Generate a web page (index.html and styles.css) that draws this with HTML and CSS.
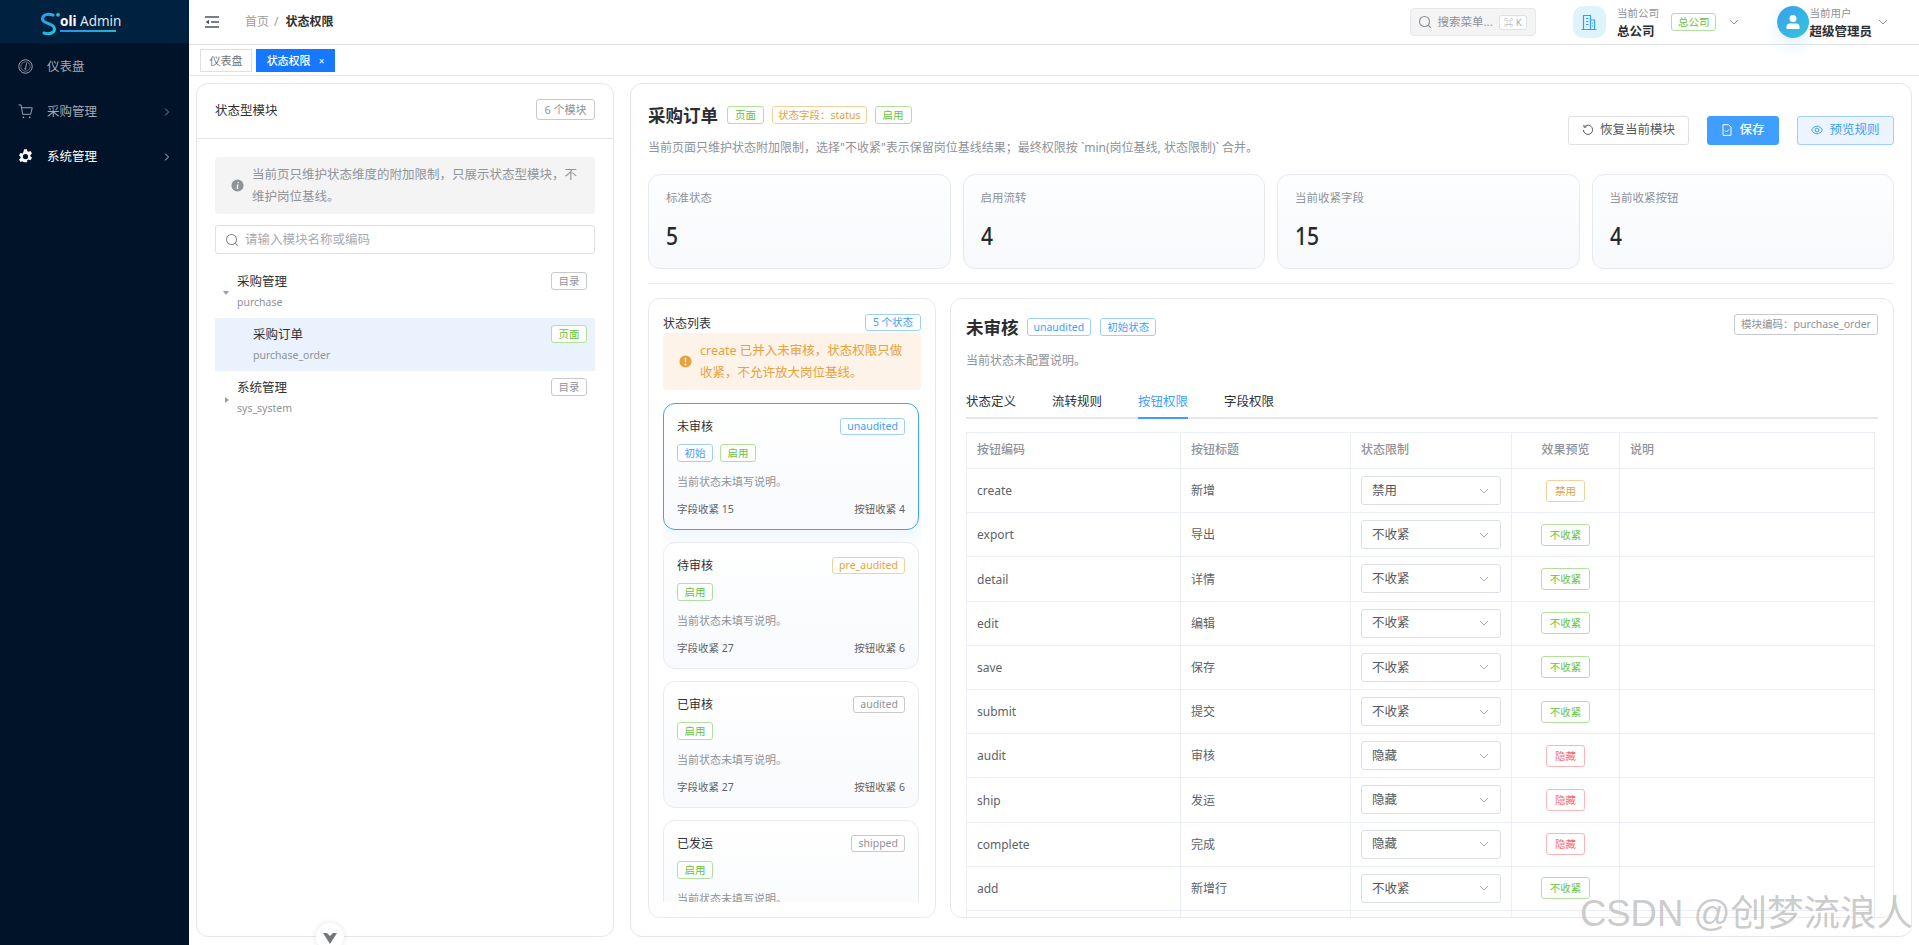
FILE: index.html
```html
<!DOCTYPE html>
<html lang="zh-CN">
<head>
<meta charset="utf-8">
<title>状态权限</title>
<link rel="stylesheet" href="styles.css">
</head>
<body>
<svg class="defs" width="0" height="0" aria-hidden="true">
  <defs>
    <linearGradient id="logoG" x1="0" y1="0" x2="1" y2="1"><stop offset="0" stop-color="#2f9bf0"/><stop offset="1" stop-color="#25c3d6"/></linearGradient>
    <symbol id="chev" viewBox="0 0 12 12"><path d="M2 4l4 4 4-4" fill="none" stroke="currentColor" stroke-width="1"/></symbol>
    <symbol id="search" viewBox="0 0 14 14"><circle cx="6.500" cy="6.500" r="5" fill="none" stroke="currentColor" stroke-width="1.100"/><path d="M10.200 10.200l2.600 2.600" stroke="currentColor" stroke-width="1.100"/></symbol>
  </defs>
</svg>
<aside class="sidebar">
  <div class="logo">
    <svg class="logo-mark" width="22" height="24" viewBox="0 0 22 24"><path d="M13 3.200C9 1.600 2.500 2 2.500 7c0 5 12 3.800 12 10 0 4.500-6 5.500-10.500 4" fill="none" stroke="url(#logoG)" stroke-width="3" stroke-linecap="round"/><circle cx="18" cy="2.800" r="1.900" fill="#25c3d6"/></svg>
    <span class="logo-text"><b>oli</b> Admin</span>
  </div>
  <nav class="menu">
    <div class="menu-item">
      <svg class="menu-icon" viewBox="0 0 16 16"><circle cx="8" cy="8" r="7.200" fill="none" stroke="currentColor"/><circle cx="8" cy="8" r="5" fill="none" stroke="currentColor" stroke-width=".6"/><path d="M9.200 4.500L8 10" stroke="currentColor"/><circle cx="7.800" cy="10.500" r="1" fill="currentColor"/></svg>
      <span>仪表盘</span>
    </div>
    <div class="menu-item">
      <svg class="menu-icon" viewBox="0 0 16 16"><path d="M.5 1h2.700L5 11h8.500l1.700-7H3.800" fill="none" stroke="currentColor"/><circle cx="5.800" cy="14.200" r=".9" fill="currentColor"/><circle cx="12.500" cy="14.200" r=".9" fill="currentColor"/></svg>
      <span>采购管理</span>
      <svg class="menu-arrow" viewBox="0 0 8 12"><path d="M1.500 1.500L6 6l-4.500 4.500" fill="none" stroke="currentColor"/></svg>
    </div>
    <div class="menu-item active">
      <svg class="menu-icon" viewBox="0 0 16 16"><path fill-rule="evenodd" d="M6.400.2h3.200l.4 2.200 1.200.6 2.100-.9 1.600 2.700-1.700 1.500v1.400l1.700 1.500-1.600 2.700-2.100-.8-1.200.7-.4 2.200H6.400L6 13.800l-1.200-.7-2.100.8-1.600-2.700 1.700-1.500V8.300L1.100 6.800l1.600-2.700 2.100.9L6 2.400zM8 5.200a2.800 2.800 0 100 5.600 2.800 2.800 0 000-5.600z" fill="currentColor"/></svg>
      <span>系统管理</span>
      <svg class="menu-arrow" viewBox="0 0 8 12"><path d="M1.500 1.500L6 6l-4.500 4.500" fill="none" stroke="currentColor"/></svg>
    </div>
  </nav>
</aside>
<div class="main">
  <header class="topbar">
    <svg class="hamburger" width="14" height="12" viewBox="0 0 14 12"><path d="M0 1h14M6 6h8M0 11h14" stroke="#4c5566" stroke-width="1.700"/><path d="M4 3.800L.6 6 4 8.200z" fill="#4c5566"/></svg>
    <div class="crumbs"><span class="crumb-home">首页</span><span class="crumb-sep">/</span><b>状态权限</b></div>
    <div class="top-right">
      <div class="top-search">
        <svg class="ico14" viewBox="0 0 14 14"><use href="#search"/></svg>
        <span class="top-search-text">搜索菜单...</span>
        <span class="kbd">⌘ K</span>
      </div>
      <div class="company">
        <span class="company-ico"><svg width="16" height="17" viewBox="0 0 16 17"><path d="M2.500 15.500V1.500h7v14M9.500 6h4v9.500M0.500 15.500h15M5 4.500h2.500M5 7.500h2.500M5 10.500h2.500M11 9h1M11 12h1" fill="none" stroke="#3a9bff" stroke-width="1.200"/></svg></span>
        <div class="who"><small>当前公司</small><b>总公司</b></div>
        <span class="tag green co-tag">总公司</span>
        <svg class="chev-top" viewBox="0 0 12 12"><use href="#chev"/></svg>
      </div>
      <div class="user">
        <span class="avatar"><svg width="16" height="16" viewBox="0 0 16 16"><circle cx="8" cy="4.500" r="3.500" fill="#fff"/><path d="M1.500 15v-2.500C1.500 10.500 3 9.500 5 9.500h6c2 0 3.500 1 3.500 3V15z" fill="#fff"/></svg></span>
        <div class="who"><small>当前用户</small><b>超级管理员</b></div>
        <svg class="chev-top" viewBox="0 0 12 12"><use href="#chev"/></svg>
      </div>
    </div>
  </header>
  <div class="tabsbar">
    <span class="page-tab">仪表盘</span>
    <span class="page-tab current">状态权限<i>×</i></span>
  </div>
  <div class="content">
    <section class="left-panel">
      <div class="left-head"><span>状态型模块</span><span class="tag grey count-tag">6 个模块</span></div>
      <div class="left-body">
        <div class="notice">
          <svg class="notice-ico" viewBox="0 0 14 14"><circle cx="7" cy="7" r="6.500" fill="#909399"/><path d="M7.400 3.300h1.100l-.3 1.300H7.100zM6.900 6h1.200l-.8 3.600c-.1.500.3.500.8.200l-.1.600c-1.300.6-2.200.3-1.900-.9l.5-2.800-.7-.1z" fill="#fff"/></svg>
          <p>当前页只维护状态维度的附加限制，只展示状态型模块，不维护岗位基线。</p>
        </div>
        <div class="search-box">
          <svg class="ico14" viewBox="0 0 14 14"><use href="#search"/></svg>
          <span>请输入模块名称或编码</span>
        </div>
        <div class="tree">
          <div class="node">
            <span class="caret down"></span>
            <div class="node-text"><b>采购管理</b><small>purchase</small></div>
            <span class="tag grey node-tag">目录</span>
          </div>
          <div class="node child selected">
            <div class="node-text"><b>采购订单</b><small>purchase_order</small></div>
            <span class="tag green node-tag">页面</span>
          </div>
          <div class="node">
            <span class="caret right"></span>
            <div class="node-text"><b>系统管理</b><small>sys_system</small></div>
            <span class="tag grey node-tag">目录</span>
          </div>
        </div>
      </div>
    </section>
    <section class="right-panel">
      <div class="page-head">
        <div class="page-head-main">
          <div class="title-row">
            <h1>采购订单</h1>
            <span class="tag green">页面</span>
            <span class="tag orange">状态字段：status</span>
            <span class="tag green">启用</span>
          </div>
          <p class="page-desc">当前页面只维护状态附加限制，选择"不收紧"表示保留岗位基线结果；最终权限按 `min(岗位基线, 状态限制)` 合并。</p>
        </div>
        <div class="page-actions">
          <button class="btn"><svg class="ico12" viewBox="0 0 12 12"><path d="M2.700 2.600A4.600 4.600 0 111.400 6" fill="none" stroke="currentColor"/><path d="M1.800.9l.4 2.500 2.400-.6" fill="none" stroke="currentColor"/></svg>恢复当前模块</button>
          <button class="btn primary"><svg class="ico12" viewBox="0 0 12 12"><path d="M2 .7h5.500L10 3.200v8.100H2z" fill="none" stroke="currentColor"/><path d="M4 6.500l1.500 1.500L8 5.300" fill="none" stroke="currentColor"/></svg>保存</button>
          <button class="btn light"><svg class="ico12" viewBox="0 0 12 12"><path d="M.6 6C2 3.400 3.900 2.200 6 2.200S10 3.400 11.400 6C10 8.600 8.100 9.800 6 9.800S2 8.600.6 6z" fill="none" stroke="currentColor"/><circle cx="6" cy="6" r="1.900" fill="none" stroke="currentColor"/></svg>预览规则</button>
        </div>
      </div>
      <div class="stats">
        <div class="stat"><small>标准状态</small><strong>5</strong></div>
        <div class="stat"><small>启用流转</small><strong>4</strong></div>
        <div class="stat"><small>当前收紧字段</small><strong>15</strong></div>
        <div class="stat"><small>当前收紧按钮</small><strong>4</strong></div>
      </div>
      <div class="rule"></div>
      <div class="split">
        <div class="state-panel">
          <div class="state-head"><span>状态列表</span><span class="tag blue">5 个状态</span></div>
          <div class="warn">
            <svg class="warn-ico" viewBox="0 0 14 14"><circle cx="7" cy="7" r="6.500" fill="#e6a23c"/><path d="M6.200 3h1.600l-.3 5h-1zM7 9.200a1 1 0 110 2 1 1 0 010-2z" fill="#fff"/></svg>
            <p>create 已并入未审核，状态权限只做收紧，不允许放大岗位基线。</p>
          </div>
          <div class="state-list">
            <article class="state-card selected">
              <div class="card-top"><b>未审核</b><span class="tag blue">unaudited</span></div>
              <div class="card-tags"><span class="tag blue">初始</span><span class="tag green">启用</span></div>
              <p>当前状态未填写说明。</p>
              <div class="card-foot"><span>字段收紧 15</span><span>按钮收紧 4</span></div>
            </article>
            <article class="state-card">
              <div class="card-top"><b>待审核</b><span class="tag orange">pre_audited</span></div>
              <div class="card-tags"><span class="tag green">启用</span></div>
              <p>当前状态未填写说明。</p>
              <div class="card-foot"><span>字段收紧 27</span><span>按钮收紧 6</span></div>
            </article>
            <article class="state-card">
              <div class="card-top"><b>已审核</b><span class="tag grey">audited</span></div>
              <div class="card-tags"><span class="tag green">启用</span></div>
              <p>当前状态未填写说明。</p>
              <div class="card-foot"><span>字段收紧 27</span><span>按钮收紧 6</span></div>
            </article>
            <article class="state-card">
              <div class="card-top"><b>已发运</b><span class="tag grey">shipped</span></div>
              <div class="card-tags"><span class="tag green">启用</span></div>
              <p>当前状态未填写说明。</p>
            </article>
          </div>
        </div>
        <div class="detail-panel">
          <div class="detail-head">
            <div class="detail-title"><h2>未审核</h2><span class="tag blue">unaudited</span><span class="tag blue">初始状态</span></div>
            <span class="tag grey code-tag">模块编码：purchase_order</span>
          </div>
          <p class="detail-desc">当前状态未配置说明。</p>
          <div class="detail-tabs">
            <span>状态定义</span><span>流转规则</span><span class="on">按钮权限</span><span>字段权限</span>
          </div>
          <div class="table-wrap">
            <table class="perm">
              <colgroup><col class="c1"><col class="c2"><col class="c3"><col class="c4"><col></colgroup>
              <thead><tr><th>按钮编码</th><th>按钮标题</th><th>状态限制</th><th class="mid">效果预览</th><th>说明</th></tr></thead>
              <tbody>
                <tr><td>create</td><td>新增</td><td><div class="sel"><span>禁用</span><svg viewBox="0 0 12 12"><use href="#chev"/></svg></div></td><td class="mid"><span class="tag orange">禁用</span></td><td></td></tr>
                <tr><td>export</td><td>导出</td><td><div class="sel"><span>不收紧</span><svg viewBox="0 0 12 12"><use href="#chev"/></svg></div></td><td class="mid"><span class="tag green">不收紧</span></td><td></td></tr>
                <tr><td>detail</td><td>详情</td><td><div class="sel"><span>不收紧</span><svg viewBox="0 0 12 12"><use href="#chev"/></svg></div></td><td class="mid"><span class="tag green">不收紧</span></td><td></td></tr>
                <tr><td>edit</td><td>编辑</td><td><div class="sel"><span>不收紧</span><svg viewBox="0 0 12 12"><use href="#chev"/></svg></div></td><td class="mid"><span class="tag green">不收紧</span></td><td></td></tr>
                <tr><td>save</td><td>保存</td><td><div class="sel"><span>不收紧</span><svg viewBox="0 0 12 12"><use href="#chev"/></svg></div></td><td class="mid"><span class="tag green">不收紧</span></td><td></td></tr>
                <tr><td>submit</td><td>提交</td><td><div class="sel"><span>不收紧</span><svg viewBox="0 0 12 12"><use href="#chev"/></svg></div></td><td class="mid"><span class="tag green">不收紧</span></td><td></td></tr>
                <tr><td>audit</td><td>审核</td><td><div class="sel"><span>隐藏</span><svg viewBox="0 0 12 12"><use href="#chev"/></svg></div></td><td class="mid"><span class="tag red">隐藏</span></td><td></td></tr>
                <tr><td>ship</td><td>发运</td><td><div class="sel"><span>隐藏</span><svg viewBox="0 0 12 12"><use href="#chev"/></svg></div></td><td class="mid"><span class="tag red">隐藏</span></td><td></td></tr>
                <tr><td>complete</td><td>完成</td><td><div class="sel"><span>隐藏</span><svg viewBox="0 0 12 12"><use href="#chev"/></svg></div></td><td class="mid"><span class="tag red">隐藏</span></td><td></td></tr>
                <tr><td>add</td><td>新增行</td><td><div class="sel"><span>不收紧</span><svg viewBox="0 0 12 12"><use href="#chev"/></svg></div></td><td class="mid"><span class="tag green">不收紧</span></td><td></td></tr>
                <tr><td></td><td></td><td></td><td></td><td></td></tr>
              </tbody>
            </table>
          </div>
        </div>
      </div>
    </section>
  </div>
</div>
<div class="collapse-handle"><svg width="14" height="12" viewBox="0 0 14 12"><path d="M0 1h4l3 3 3-3h4L7 12z" fill="#74777c"/></svg></div>
<div class="watermark">CSDN @创梦流浪人</div>
</body>
</html>
```

FILE: styles.css
```css
* { box-sizing: border-box; }
html, body { height: 100%; }
body {
  margin: 0;
  display: flex;
  overflow: hidden;
  position: relative;
  background: #fff;
  color: #303133;
  font: 12.5px/1.4 "Noto Sans", "Noto Sans CJK SC", sans-serif;
}
.defs { position: absolute; }
p, h1, h2 { margin: 0; }
small { font-size: inherit; }

/* sidebar */
.sidebar { width: 189px; flex: none; background: #001329; color: #a3a9b1; }
.logo {
  height: 43px;
  background: #00213f;
  display: flex;
  align-items: flex-start;
  padding: 12px 0 0 40px;
}
.logo-text {
  margin: 1px 0 0 -2px;
  width: 56px;
  color: #dfe6ee;
  font-size: 13.5px;
  line-height: 17px;
  white-space: nowrap;
  padding-bottom: 0;
  border-bottom: 2px solid;
  border-image: linear-gradient(90deg, #2f8ce8, #22b8c8) 1;
}
.logo-text b { color: #fff; }
.menu { padding-top: 1px; }
.menu-item {
  height: 45px;
  display: flex;
  align-items: center;
  padding-left: 18px;
  font-size: 12.5px;
}
.menu-item.active { color: #fff; }
.menu-icon { width: 15px; height: 15px; margin-right: 14px; flex: none; }
.menu-arrow { width: 6px; height: 10px; margin-left: auto; margin-right: 19px; }

/* main */
.main { flex: 1; min-width: 0; display: flex; flex-direction: column; }
.topbar {
  height: 45px;
  flex: none;
  display: flex;
  align-items: center;
  padding: 0 30px 0 16px;
  border-bottom: 1px solid #dfe1e5;
}
.hamburger { flex: none; }
.crumbs { margin-left: 26px; font-size: 12px; display: flex; }
.crumb-home { color: #9a9da3; }
.crumb-sep { color: #9a9da3; margin: 0 7px 0 5px; }
.crumbs b { color: #303133; }
.top-right { margin-left: auto; display: flex; align-items: center; }
.ico14 { width: 14px; height: 14px; flex: none; color: #8a8d93; }
.ico12 { width: 12px; height: 12px; flex: none; }
.top-search {
  width: 126px;
  height: 28px;
  display: flex;
  align-items: center;
  padding-left: 7px;
  background: #f4f4f5;
  border: 1px solid #e6e7ea;
  border-radius: 4px;
  color: #909399;
  font-size: 11.5px;
}
.top-search-text { margin-left: 5px; white-space: nowrap; }
.kbd {
  margin-left: 6px;
  width: 28px;
  height: 15px;
  line-height: 13px;
  text-align: center;
  border: 1px solid #dedfe2;
  border-radius: 3px;
  background: #fff;
  font-size: 9.5px;
  color: #a8abb2;
}
.company { display: flex; align-items: center; margin-left: 36.500px; }
.company-ico {
  width: 33px;
  height: 32px;
  border-radius: 10px;
  background: #dff3fa;
  display: flex;
  align-items: center;
  justify-content: center;
}
.who { display: flex; flex-direction: column; line-height: 16px; }
.who small { font-size: 10.5px; color: #8f9298; }
.who b { font-size: 12.5px; color: #2b2d31; margin-top: 3px; }
.company .who { margin-left: 11px; }
.co-tag { margin-left: 12px; }
.chev-top { width: 12px; height: 12px; margin-left: 12px; color: #909399; flex: none; }
.user { display: flex; align-items: center; margin-left: 37px; }
.avatar {
  width: 32px;
  height: 32px;
  border-radius: 50%;
  background: linear-gradient(135deg, #3a9ef0, #35c6d8);
  display: flex;
  align-items: center;
  justify-content: center;
  box-shadow: 0 8px 16px rgba(64, 158, 255, .14);
}
.user .chev-top { margin-left: 5px; }

.tabsbar {
  height: 31px;
  flex: none;
  display: flex;
  align-items: flex-start;
  gap: 4px;
  padding: 4px 0 0 11px;
  border-bottom: 1px solid #e6e8ec;
}
.page-tab {
  height: 23px;
  width: 52px;
  border: 1px solid #dcdfe6;
  color: #707378;
  font-size: 11px;
  line-height: 21px;
  text-align: center;
}
.page-tab.current {
  width: 79px;
  border-color: #1677ff;
  background: #1677ff;
  color: #fff;
  font-weight: 500;
}
.page-tab i { font-style: normal; font-size: 10px; margin-left: 8px; font-weight: 400; }

.content {
  flex: 1;
  min-height: 0;
  display: flex;
  gap: 16px;
  padding: 7px 7px 8px 7px;
}

/* shared tag */
.tag {
  display: inline-block;
  height: 18px;
  padding: 0 6px;
  border: 1px solid;
  border-radius: 3px;
  font-size: 10.5px;
  line-height: 16px;
  white-space: nowrap;
  background: #fff;
}
.green { color: #67c23a; border-color: #b3e19d; }
.orange { color: #e6a23c; border-color: #f3d19e; }
.red { color: #f56c6c; border-color: #fab6b6; }
.grey { color: #909399; border-color: #c8c9cc; }
.blue { color: #409eff; border-color: #a0cfff; }

/* left */
.left-panel {
  width: 418px;
  flex: none;
  border: 1px solid #e4e6ee;
  border-radius: 12px;
}
.left-head {
  height: 55px;
  padding: 0 18px;
  display: flex;
  align-items: center;
  justify-content: space-between;
  border-bottom: 1px solid #e4e6ee;
  font-size: 12.5px;
  color: #303133;
}
.count-tag { height: 21px; line-height: 19px; width: 59px; margin-top: -3px; text-align: center; padding: 0; font-size: 11px; }
.left-body { padding: 18px 18px 0 18px; }
.notice {
  height: 57px;
  background: #f4f4f5;
  border-radius: 4px;
  display: flex;
  align-items: center;
  padding: 0 14px 0 16px;
  color: #909399;
  font-size: 12.5px;
  line-height: 22px;
}
.notice-ico { width: 13px; height: 13px; flex: none; margin-right: 8px; }
.search-box {
  height: 29px;
  margin-top: 11px;
  border: 1px solid #dcdfe6;
  border-radius: 3px;
  display: flex;
  align-items: center;
  padding-left: 9px;
  color: #a8abb2;
  font-size: 12.5px;
}
.search-box span { margin-left: 6px; padding-top: 1px; }
.tree { margin-top: 11px; }
.node {
  height: 53px;
  display: flex;
  align-items: flex-start;
  position: relative;
  padding: 7px 8px 0 22px;
}
.node.child { padding-left: 38px; }
.node.selected { background: #e9f2fd; }
.node-text { flex: 1; display: flex; flex-direction: column; padding-top: 1px; }
.node-text b { font-weight: 400; font-size: 12.5px; line-height: 18px; color: #303133; }
.node-text small { font-size: 10.5px; line-height: 16px; margin-top: 3px; color: #8f9299; }
.node-tag { height: 18px; width: 36px; padding: 0; text-align: center; font-size: 10.5px; }
.caret { position: absolute; left: 8px; top: 26px; width: 0; height: 0; border-style: solid; }
.caret.down { border-width: 4px 3px 0; border-color: #9a9da3 transparent transparent; }
.caret.right { border-width: 3px 0 3px 4px; border-color: transparent transparent transparent #9a9da3; left: 10px; }

/* right */
.right-panel {
  flex: 1;
  min-width: 0;
  display: flex;
  flex-direction: column;
  border: 1px solid #e4e6ee;
  border-radius: 12px;
  padding: 17px 17px 18px 17px;
}
.page-head { display: flex; align-items: center; justify-content: space-between; }
.title-row { display: flex; align-items: center; gap: 8px; height: 28px; }
.title-row h1 { font-size: 17.5px; font-weight: 700; color: #2b2d31; margin-right: 1px; }
.title-row .tag { min-width: 37px; padding: 0 5px; text-align: center; }
.page-desc { margin-top: 9px; height: 20px; line-height: 20px; font-size: 12px; color: #8f9299; white-space: pre; }
.page-actions { display: flex; gap: 18px; margin-top: 1px; }
.btn {
  height: 29px;
  display: flex;
  align-items: center;
  gap: 6px;
  padding: 0 13px;
  border: 1px solid #dcdfe6;
  border-radius: 3px;
  background: #fff;
  color: #55585e;
  font: inherit;
  font-size: 12.5px;
}
.btn.primary { background: #409eff; border-color: #409eff; color: #fff; font-weight: 500; padding: 0 13.500px; }
.btn.light { background: #ecf5ff; border-color: #a0cfff; color: #409eff; padding: 0 13.500px; }

.stats { display: grid; grid-template-columns: repeat(4, 1fr); gap: 12px; margin-top: 16px; flex: none; }
.stat {
  height: 95px;
  border: 1px solid #e7eaf2;
  border-radius: 12px;
  background: linear-gradient(180deg, #fdfeff, #f7f9fc);
  padding: 14px 17px 0;
  display: flex;
  flex-direction: column;
  align-items: flex-start;
}
.stat small { font-size: 11.500px; color: #8f9299; line-height: 18px; }
.stat strong {
  font-size: 25px;
  font-weight: 500;
  color: #26282c;
  line-height: 32px;
  margin-top: 12px;
  transform: scaleX(.84);
  transform-origin: left center;
}
.rule { height: 1px; background: #e7eaf0; margin: 14px 0; flex: none; }

.split { flex: 1; min-height: 0; display: grid; grid-template-columns: 288px 1fr; gap: 14px; }
.state-panel {
  min-height: 0;
  display: flex;
  flex-direction: column;
  border: 1px solid #e7eaf0;
  border-radius: 12px;
  padding: 15px 14px 15px 14px;
}
.state-head { display: flex; align-items: center; justify-content: space-between; height: 17px; font-size: 12px; flex: none; }
.state-head span:first-child { margin-top: 4px; }
.state-head .tag { height: 17px; line-height: 15px; width: 56px; padding: 0; text-align: center; }
.warn {
  height: 57px;
  flex: none;
  margin-top: 2px;
  background: #fdf3e8;
  border-radius: 4px;
  display: flex;
  align-items: center;
  padding: 0 15px 0 16px;
  color: #e6a23c;
  font-size: 12.5px;
  line-height: 22px;
}
.warn-ico { width: 13px; height: 13px; flex: none; margin-right: 8px; }
.state-list {
  flex: 1;
  min-height: 0;
  overflow: hidden;
  margin-top: 13px;
  display: flex;
  flex-direction: column;
  gap: 12px;
  padding-right: 2px;
}
.state-card {
  flex: none;
  height: 127px;
  border: 1px solid #e8ebf2;
  border-radius: 12px;
  background: linear-gradient(180deg, #fff, #f8fafd);
  padding: 14px 13px 0;
}
.state-card.selected { border-color: #409eff; box-shadow: 0 10px 20px rgba(64, 158, 255, .1); }
.card-top { display: flex; justify-content: space-between; align-items: center; height: 18px; }
.card-top b { font-weight: 400; font-size: 12px; color: #303133; }
.card-top .tag { height: 17px; line-height: 15px; margin-top: -2px; }
.card-tags { display: flex; gap: 7px; margin-top: 8px; }
.card-tags .tag { width: 36px; padding: 0; text-align: center; }
.state-card p { font-size: 11px; line-height: 19px; margin-top: 10px; color: #8f9299; }
.card-foot { display: flex; justify-content: space-between; margin-top: 9px; font-size: 10.5px; line-height: 18px; color: #5f6267; }

.detail-panel {
  min-width: 0;
  min-height: 0;
  overflow: hidden;
  display: flex;
  flex-direction: column;
  border: 1px solid #e7eaf0;
  border-radius: 12px;
  padding: 15px 15px 0;
}
.detail-head { display: flex; justify-content: space-between; align-items: flex-start; }
.detail-title { display: flex; align-items: center; gap: 9px; height: 26px; }
.detail-title h2 { font-size: 17.5px; font-weight: 700; color: #2b2d31; margin-right: -1px; }
.code-tag { height: 21px; line-height: 19px; width: 144px; padding: 0; text-align: center; }
.detail-desc { margin-top: 11px; line-height: 20px; font-size: 12px; color: #8f9299; }
.detail-tabs {
  display: flex;
  gap: 36px;
  margin-top: 22px;
  height: 26px;
  border-bottom: 2px solid #e4e7ed;
  font-size: 12.5px;
  line-height: 18px;
  flex: none;
}
.detail-tabs span { width: 50px; height: 26px; white-space: nowrap; color: #303133; }
.detail-tabs .on { color: #409eff; border-bottom: 2px solid #409eff; }
.table-wrap { margin-top: 13px; padding-right: 3px; flex: 1; min-height: 0; }
.perm { width: 100%; table-layout: fixed; border-collapse: collapse; font-size: 12px; color: #5f6267; }
.c1 { width: 214px; } .c2 { width: 170px; } .c3 { width: 161px; } .c4 { width: 108px; }
.perm th, .perm td { border: 1px solid #ebeef5; padding: 0 10px; text-align: left; }
.perm th { height: 36px; font-weight: 500; color: #909399; }
.perm td { height: 44.2px; }
.perm td:nth-child(-n+2) { padding-top: 2px; }
.perm .mid { text-align: center; }
.sel {
  height: 29px;
  display: flex;
  align-items: center;
  justify-content: space-between;
  border: 1px solid #dcdfe6;
  border-radius: 3px;
  padding: 0 10px 0 10px;
  font-size: 12.5px;
  color: #55585e;
}
.sel svg { width: 12px; height: 12px; color: #a8abb2; }
.perm .tag { height: 22px; line-height: 20px; padding: 0 8px; vertical-align: middle; }

/* overlays */
.collapse-handle {
  position: absolute;
  left: 316px;
  top: 923px;
  width: 28px;
  height: 28px;
  border-radius: 50%;
  background: #fff;
  box-shadow: 0 0 6px rgba(0, 0, 0, .1);
  display: flex;
  justify-content: center;
  padding-top: 9px;
}
.watermark {
  position: absolute;
  right: 6px;
  bottom: 8px;
  font: 36.500px/46px "Liberation Sans", "Noto Sans CJK SC", sans-serif;
  color: rgba(170, 170, 170, .62);
  text-shadow: 1px 1px 1px rgba(255, 255, 255, .7);
  white-space: nowrap;
}
```
